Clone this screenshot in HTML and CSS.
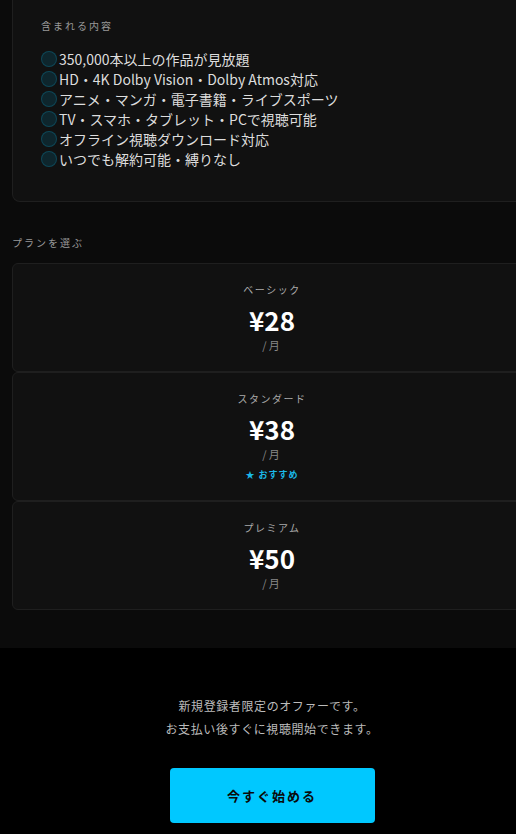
FILE: index.html
```html
<!DOCTYPE html>
<html lang="ja">
<head>
  <meta charset="UTF-8">
  <meta name="viewport" content="width=device-width, initial-scale=1.0">
  <title>プランを選ぶ</title>
  <link rel="stylesheet" href="styles.css">
</head>
<body>

  <div class="page">
    <section class="plans">
      <div class="features">
        <p class="label">含まれる内容</p>
        <ul class="feature-list">
          <li><span class="dot"></span>350,000本以上の作品が見放題</li>
          <li><span class="dot"></span>HD・4K Dolby Vision・Dolby Atmos対応</li>
          <li><span class="dot"></span>アニメ・マンガ・電子書籍・ライブスポーツ</li>
          <li><span class="dot"></span>TV・スマホ・タブレット・PCで視聴可能</li>
          <li><span class="dot"></span>オフライン視聴ダウンロード対応</li>
          <li><span class="dot"></span>いつでも解約可能・縛りなし</li>
        </ul>
      </div>

      <p class="label section-label">プランを選ぶ</p>

      <div class="plan-list">
        <div class="plan">
          <div class="plan-name">ベーシック</div>
          <div class="plan-price">¥28</div>
          <div class="plan-unit">/月</div>
        </div>
        <div class="plan">
          <div class="plan-name">スタンダード</div>
          <div class="plan-price">¥38</div>
          <div class="plan-unit">/月</div>
          <div class="plan-badge">★ おすすめ</div>
        </div>
        <div class="plan">
          <div class="plan-name">プレミアム</div>
          <div class="plan-price">¥50</div>
          <div class="plan-unit">/月</div>
        </div>
      </div>
    </section>

    <section class="cta">
      <p>新規登録者限定のオファーです。</p>
      <p>お支払い後すぐに視聴開始できます。</p>
      <button type="button" class="start-button">今すぐ始める</button>
    </section>
  </div>

</body>
</html>
```

FILE: styles.css
```css
html, body {
  overflow: hidden;
}

body {
  margin: 0;
  background-color: #000;
  color: #ddd;
  font-family: "Noto Sans CJK JP", "Noto Sans", sans-serif;
}

.page {
  width: 544px;
}

.plans {
  background-color: #0b0b0b;
  padding: 0 12px 38px;
}

.features {
  background-color: #111;
  border: 1px solid #1f1f1f;
  border-top: none;
  border-radius: 0 0 8px 8px;
  padding: 19px 28px 32px;
}

.label {
  margin: 0;
  font-size: 10px;
  line-height: 14px;
  letter-spacing: 2px;
  color: #999;
}

.feature-list {
  list-style: none;
  margin: 16px 0 0;
  padding: 0;
}

.feature-list li {
  display: flex;
  align-items: center;
  gap: 2px;
  height: 20px;
  font-size: 14px;
  color: #ddd;
}

.dot {
  flex: none;
  width: 16px;
  height: 16px;
  box-sizing: border-box;
  border-radius: 50%;
  background-color: rgba(0, 200, 255, 0.12);
  border: 1px solid rgba(0, 200, 255, 0.2);
}

.section-label {
  margin: 34px 0 13px;
}

.plan {
  background-color: #111;
  border: 1px solid #1f1f1f;
  border-radius: 6px;
  padding: 19px 0 19px;
  text-align: center;
}

.plan-name {
  font-size: 10px;
  line-height: 14px;
  letter-spacing: 1.5px;
  color: #aaa;
}

.plan-price {
  margin-top: 8px;
  font-size: 26px;
  line-height: 30px;
  font-weight: bold;
  color: #fff;
}

.plan-unit {
  margin-top: 3px;
  font-size: 11px;
  line-height: 14px;
  letter-spacing: 2px;
  color: #888;
}

.plan-badge {
  margin-top: 8px;
  font-size: 9px;
  line-height: 12px;
  font-weight: bold;
  letter-spacing: 1px;
  color: #1ab8e8;
}

.cta {
  padding: 46px 0 40px;
  text-align: center;
}

.cta p {
  margin: 0;
  font-size: 12px;
  line-height: 23px;
  letter-spacing: 0.6px;
  color: #bbb;
}

.start-button {
  margin-top: 28px;
  width: 205px;
  height: 55px;
  background-color: #00c8ff;
  color: #0a0a0a;
  border: none;
  border-radius: 4px;
  font-family: inherit;
  font-size: 13px;
  font-weight: bold;
  letter-spacing: 2px;
  cursor: pointer;
}
```
